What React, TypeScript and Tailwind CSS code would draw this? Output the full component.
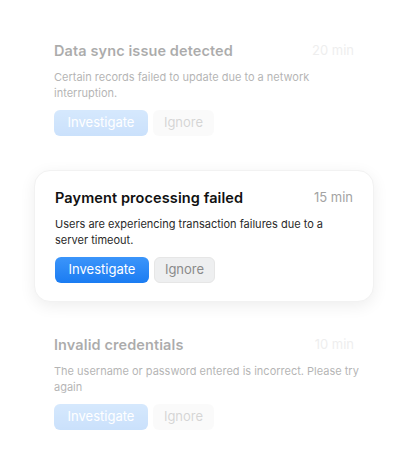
const alerts = [
  {
    title: "Data sync issue detected",
    time: "20 min",
    lines: ["Certain records failed to update due to a network", "interruption."],
    active: false,
  },
  {
    title: "Payment processing failed",
    time: "15 min",
    lines: ["Users are experiencing transaction failures due to a", "server timeout."],
    active: true,
  },
  {
    title: "Invalid credentials",
    time: "10 min",
    lines: ["The username or password entered is incorrect. Please try", "again"],
    active: false,
  },
];

function AlertCard({ title, time, lines, active }: (typeof alerts)[number]) {
  return (
    <div
      className={
        active
          ? "bg-white rounded-2xl px-5 pt-4 pb-[18px] shadow-[0_4px_16px_rgba(0,0,0,0.07)] border border-[#f2f2f2]"
          : "rounded-2xl px-5 pt-4 pb-[18px] opacity-35"
      }
    >
      <div className="flex items-center justify-between h-[22px]">
        <p className="font-semibold text-[14.5px] text-[#111] tracking-[0.1px]">{title}</p>
        <span className={active ? "text-[13px] text-[#a3a3a3]" : "text-[13px] text-[#d0d0d0]"}>{time}</span>
      </div>
      <p className="mt-[7px] text-[11px] leading-4 text-[#2a2a2a] whitespace-nowrap">
        {lines.map((l) => (
          <span key={l} className="block">
            {l}
          </span>
        ))}
      </p>
      <div className="flex gap-[5px] mt-[9px]">
        <button
          className={
            active
              ? "w-[94px] h-[26px] rounded-md text-[13px] text-white bg-gradient-to-b from-[#3b95fa] to-[#1a7cf2]"
              : "w-[94px] h-[26px] rounded-md text-[13px] text-white bg-gradient-to-b from-[#8ac0fb] to-[#6aaaf6]"
          }
        >
          Investigate
        </button>
        <button
          className={
            active
              ? "w-[61px] h-[26px] rounded-md text-[13px] text-[#8a8a8a] bg-[#eeeff0] border border-[#e6e6e6]"
              : "w-[61px] h-[26px] rounded-md text-[13px] text-[#8a8a8a] bg-[#f3f3f3]"
          }
        >
          Ignore
        </button>
      </div>
    </div>
  );
}

export default function App() {
  return (
    <div className="w-[408px] h-[474px] bg-white pt-6 pl-[34px]" style={{ fontFamily: "Inter, 'Noto Sans', sans-serif" }}>
      <div className="w-[340px] flex flex-col gap-4">
        {alerts.map((a) => (
          <AlertCard key={a.title} {...a} />
        ))}
      </div>
    </div>
  );
}
